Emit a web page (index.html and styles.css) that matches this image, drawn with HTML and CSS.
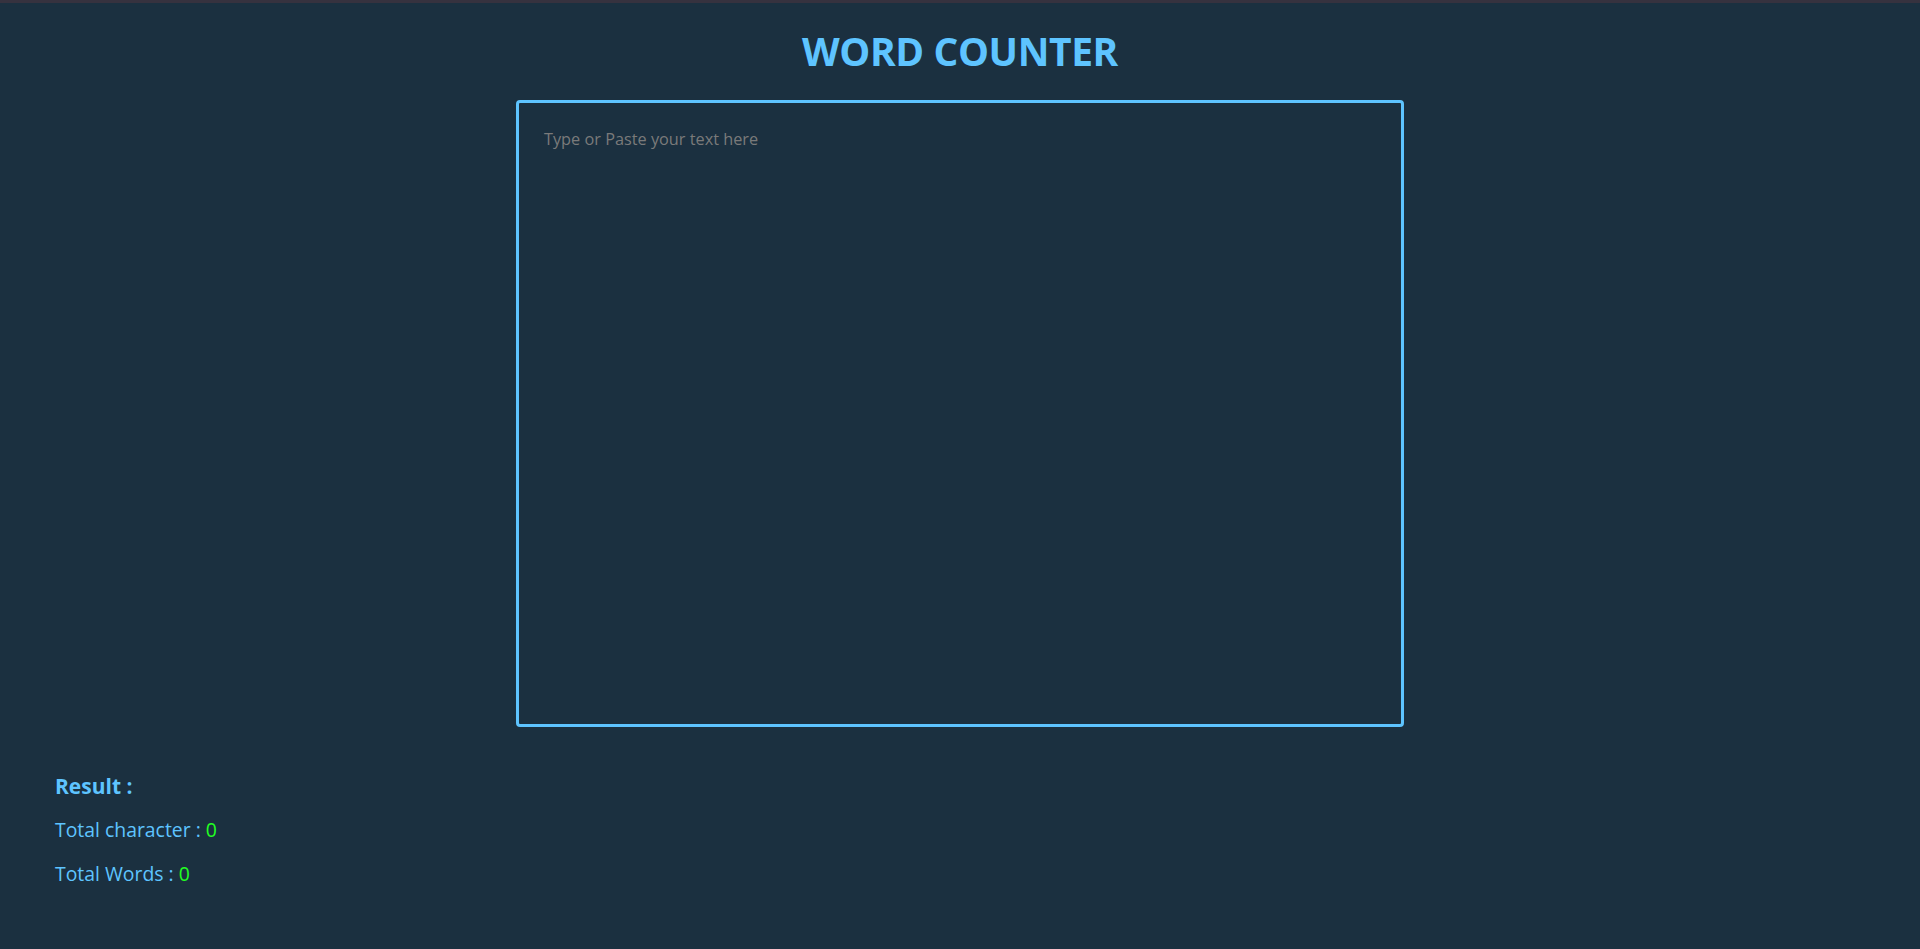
FILE: index.html
```html
<!DOCTYPE html>
<html lang="en">
<head>
<meta charset="utf-8">
<title>Word Counter</title>
<link rel="stylesheet" href="styles.css">
</head>
<body>
<div class="topbar"></div>
<main class="page">
  <h1 class="title">WORD COUNTER</h1>
  <textarea class="input" placeholder="Type or Paste your text here"></textarea>
  <section class="result">
    <h3 class="result-title">Result :</h3>
    <p class="stat">Total character : <span class="num">0</span></p>
    <p class="stat">Total Words : <span class="num">0</span></p>
  </section>
</main>
</body>
</html>
```
FILE: styles.css
```css
html, body {
  margin: 0;
  padding: 0;
  background: #1b3040;
  height: 100%;
}
body {
  font-family: "Open Sans", "Noto Sans", sans-serif;
  color: #5ec4ff;
}
.topbar {
  height: 3px;
  background: #36323f;
}
.page {
  display: flex;
  flex-direction: column;
  align-items: center;
}
.title {
  margin: 28px 0 0;
  height: 69px;
  font-size: 39px;
  font-weight: 700;
  line-height: 40px;
  color: #5ec4ff;
  letter-spacing: -0.4px;
}
.input {
  box-sizing: border-box;
  width: 888px;
  height: 627px;
  border: 3px solid #5ec4ff;
  border-radius: 4px;
  background: #1b3040;
  padding: 25px 25px;
  font-family: inherit;
  font-size: 16.3px;
  color: #dddddd;
  resize: none;
  outline: none;
}
.input::placeholder {
  color: #7a7a7a;
}
.result {
  align-self: stretch;
  padding: 0 55px;
}
.result-title {
  margin: 44px 0 0;
  font-size: 21px;
  font-weight: 700;
  line-height: 30px;
}
.stat {
  margin: 14px 0 0;
  font-size: 19.4px;
  line-height: 30px;
}
.num {
  color: #22ff22;
}
```
